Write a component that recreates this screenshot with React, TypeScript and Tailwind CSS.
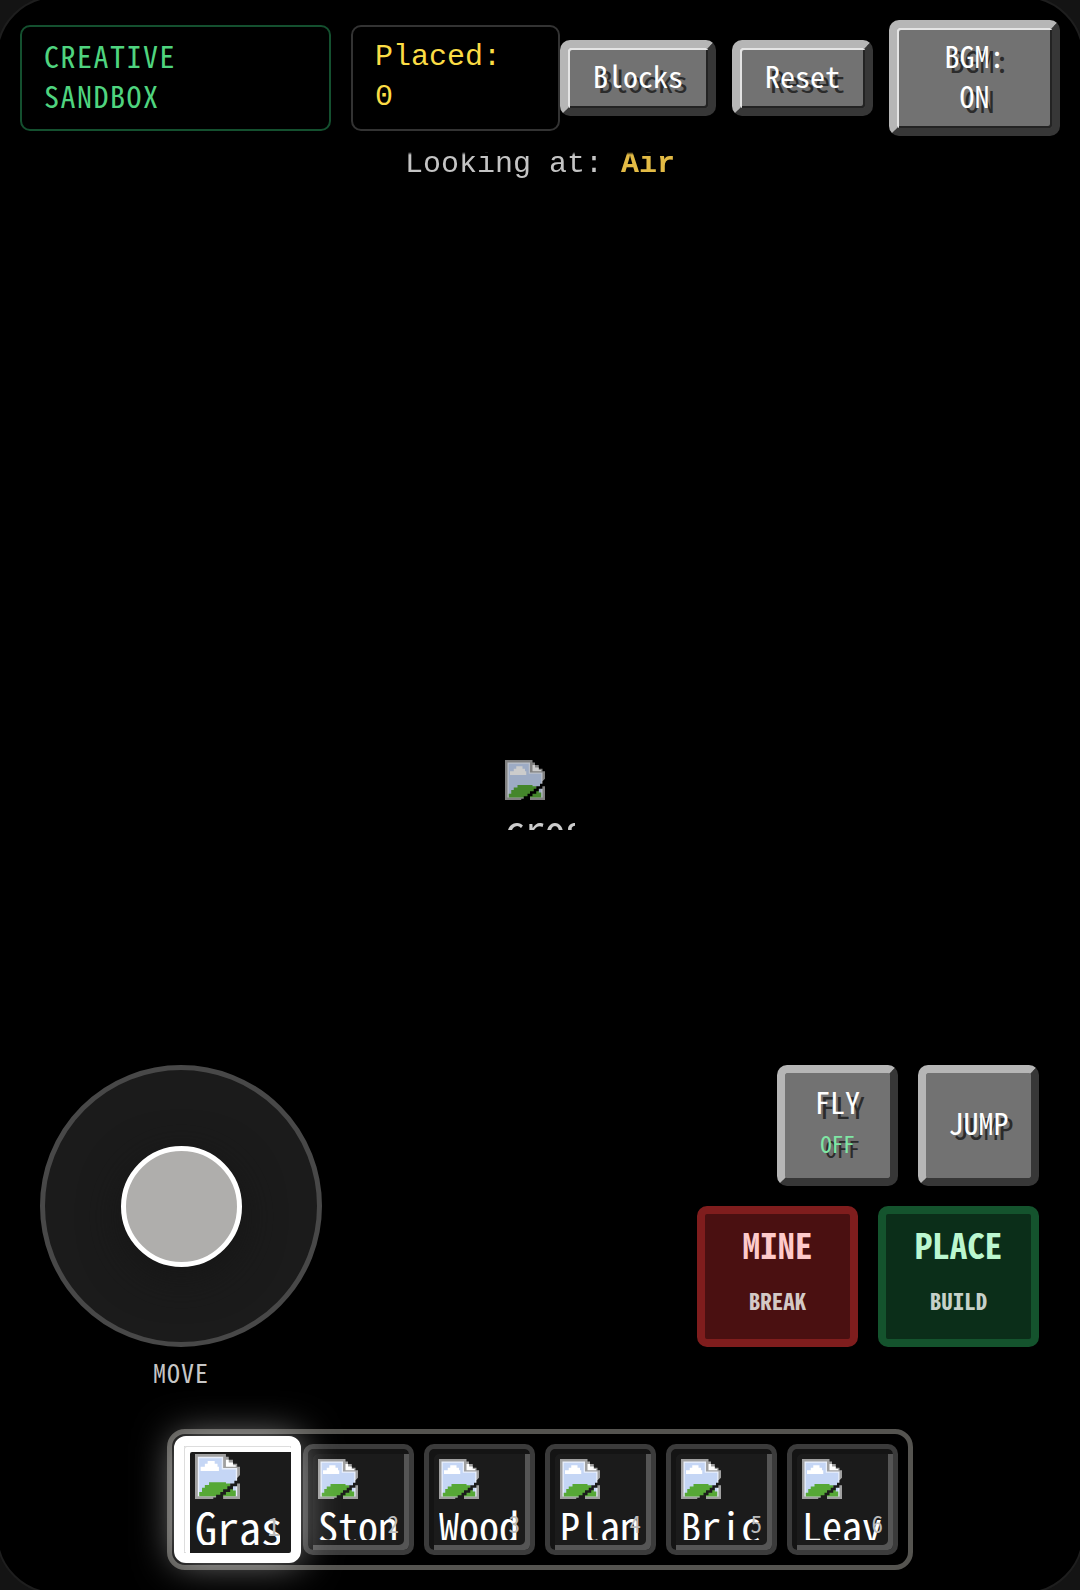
import type { ReactNode } from "react";

const BLOCKS = ["Grass", "Stone", "Wood", "Planks", "Brick", "Leaves"];

const bevel =
  "shrink-0 rounded-[10px] border-8 border-t-[#b6b6b6] border-l-[#b6b6b6] border-r-[#373737] border-b-[#373737] bg-[#727272] text-white [text-shadow:5px_5px_0_#2b2b2b]";

function MissingImage({ className, tear = "#1b1b1b" }: { className: string; tear?: string }) {
  return (
    <svg className={className} viewBox="0 0 32 32" aria-hidden="true">
      <path d="M0 0h22v2h2v2h3v3h3v2h2v23H0z" fill="#a0a0a0" />
      <path d="M2 2h18v8h10v20H2z" fill="#eaf0fc" />
      <path d="M3 3h16v8h10v18H3z" fill="#c5d6f5" />
      <path d="M4 12v-3h3V7h2V5h5v2h2v2h1v3z" fill="#fff" />
      <path d="M3 30v-3h2v-3h2v-2h3v-2h12v1h3v2h2v3h2v4z" fill="#56a836" />
      <path d="M22 2v2h2v2h3v2h2v1h-7z" fill="#fff" />
      <path
        d="M32 15v6h-2v2h-3v2h-2v2h-3v2h-2v3h-7v-1h2v-2h3v-2h2v-2h3v-2h2v-2h3v-2h2v-2z"
        fill={tear}
      />
    </svg>
  );
}

function MenuButton({ children, className = "" }: { children: ReactNode; className?: string }) {
  return (
    <button
      className={`${bevel} px-[25px] pt-[7px] pb-[13px] shadow-[inset_2px_2px_0_#e4e4e4,inset_-2px_-2px_0_#232323] ${className}`}
    >
      {children}
    </button>
  );
}

function TopBar() {
  return (
    <header className="flex items-center px-5 pt-5">
      <div className="mr-5 min-w-0 flex-1 rounded-[10px] border-2 border-[#14502f] px-[22px] pt-2 pb-[14px] tracking-wider text-[#4fd47f]">
        CREATIVE
        <br />
        SANDBOX
      </div>
      <div className="w-[209px] rounded-[10px] border-2 border-[#333] px-[22px] pt-[10px] pb-3 font-['Liberation_Mono',monospace] text-[#fbdc45]">
        Placed:
        <br />0
      </div>
      <div className="flex items-center gap-4">
        <MenuButton>Blocks</MenuButton>
        <MenuButton>Reset</MenuButton>
        <MenuButton className="w-[171px]">
          BGM:
          <br />
          ON
        </MenuButton>
      </div>
    </header>
  );
}

// top of the line fades out under the header
function Target() {
  return (
    <div className="mt-4 overflow-hidden [mask-image:linear-gradient(transparent,#000_3px)]">
      <p className="-mt-2 text-center font-['Liberation_Mono',monospace] text-[#c4c4c4]">
        Looking at: <b className="text-[#e3bb45]">Air</b>
      </p>
    </div>
  );
}

function Crosshair() {
  return (
    <div className="absolute top-1/2 left-1/2 size-[70px] -translate-1/2 overflow-hidden text-[40px] leading-[58px] text-white opacity-80">
      <MissingImage className="block size-10" tear="#000" />
      crosshair
    </div>
  );
}

function Joystick() {
  return (
    <div className="flex flex-col items-center gap-[7px]">
      <div className="grid size-[282px] place-items-center rounded-full border-5 border-[#484848] bg-[#1b1b1b]">
        <button
          aria-label="Move"
          className="size-[121px] rounded-full border-5 border-white bg-[#afaeac] shadow-[0_10px_40px_#161616]"
        />
      </div>
      <span className="text-[26px] leading-9 tracking-[1px] text-[#c6c6c6]">MOVE</span>
    </div>
  );
}

function Actions() {
  return (
    <div className="flex flex-col items-end gap-5">
      <div className="flex gap-5">
        <button className={`${bevel} size-[121px] pb-[6px]`}>
          <span className="block">FLY</span>
          <span className="block text-[23px] leading-11 text-[#7fe6a4]">OFF</span>
        </button>
        <button className={`${bevel} size-[121px] pb-2`}>JUMP</button>
      </div>
      <div className="flex gap-5 font-bold">
        <button className="h-[141px] w-[161px] rounded-[10px] border-8 border-[#7f1d1d] bg-[#4a1011] pb-3 text-[35px] text-[#fecaca]">
          MINE
          <span className="mt-[18px] block text-[23px] leading-9 text-[#d4c9c6]">BREAK</span>
        </button>
        <button className="h-[141px] w-[161px] rounded-[10px] border-8 border-[#14532d] bg-[#0b2e19] pb-3 text-[35px] text-[#bbf7d0]">
          PLACE
          <span className="mt-[18px] block text-[23px] leading-9 text-[#c6d1c9]">BUILD</span>
        </button>
      </div>
    </div>
  );
}

function Slot({ name, index, selected }: { name: string; index: number; selected: boolean }) {
  return (
    <button
      className={
        selected
          ? "relative z-10 -m-2 size-[127px] shrink-0 rounded-xl border-10 border-white bg-[#1b1b1b] text-left text-[44px] leading-[54px] text-white shadow-[0_0_38px_rgba(255,255,255,0.5),inset_1px_1px_0_#ddd,inset_6px_6px_0_#fff]"
          : "relative size-[111px] shrink-0 rounded-[10px] border-5 border-[#3b3b3b] bg-[#1b1b1b] text-left text-[40px] leading-[53px] text-white shadow-[inset_5px_5px_0_#141414,inset_-5px_-5px_0_#555]"
      }
    >
      <span
        className={
          selected
            ? "ml-[11px] block h-[91px] w-[85px] overflow-hidden"
            : "ml-[10px] block h-[81px] w-20 overflow-hidden"
        }
      >
        <MissingImage className={selected ? "block size-[45px]" : "block size-10"} />
        {name}
      </span>
      <span
        className={
          selected
            ? "absolute right-[11px] bottom-[14px] text-[25px] leading-7 text-[#bbb]"
            : "absolute right-[10px] bottom-[15px] text-[23px] leading-6 text-[#bbb]"
        }
      >
        {index}
      </span>
    </button>
  );
}

function Hotbar() {
  return (
    <div className="mx-auto mt-[39px] mb-5 flex gap-[10px] rounded-[18px] border-5 border-[#555450] p-[10px]">
      {BLOCKS.map((name, i) => (
        <Slot key={name} name={name} index={i + 1} selected={i === 0} />
      ))}
    </div>
  );
}

export default function App() {
  return (
    <div className="relative min-h-screen overflow-hidden bg-[#141414] font-['Noto_Sans_Mono_CJK_SC','Noto_Sans_Mono_CJK_JP',monospace] text-[30px] leading-10">
      <div className="pointer-events-none absolute -inset-1 rounded-[60px] border-2 border-[#1e1e1e] bg-black" />
      <main className="relative flex min-h-screen flex-col">
        <TopBar />
        <Target />
        <Crosshair />
        <div className="mt-auto flex items-start justify-between pr-[41px] pl-10">
          <Joystick />
          <Actions />
        </div>
        <Hotbar />
      </main>
    </div>
  );
}
